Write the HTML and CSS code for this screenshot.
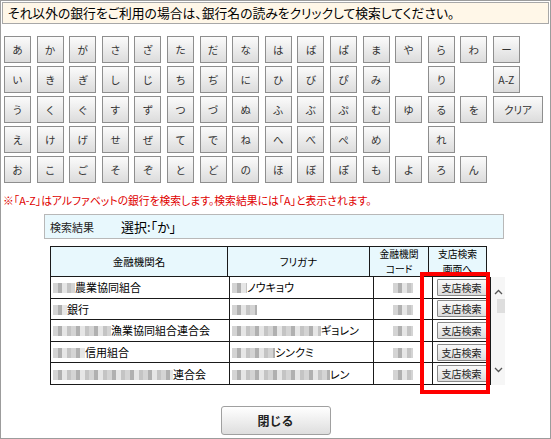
FILE: index.html
```html
<!DOCTYPE html>
<html lang="ja">
<head>
    <meta charset="UTF-8">
    <meta name="viewport" content="width=device-width, initial-scale=1.0">
    <title>金融機関検索</title>
    <link rel="stylesheet" href="styles.css">
</head>
<body>
<div class="frame">
    <!-- guide -->
    <div class="guide">それ以外の銀行をご利用の場合は、銀行名の読みをクリックして検索してください。</div>

    <!-- kana keys -->
    <div class="kana-pad">
        <div class="kana-row">
            <span class="key">あ</span><span class="key">か</span><span class="key">が</span><span class="key">さ</span><span class="key">ざ</span><span class="key">た</span><span class="key">だ</span><span class="key">な</span><span class="key">は</span><span class="key">ば</span><span class="key">ぱ</span><span class="key">ま</span><span class="key">や</span><span class="key">ら</span><span class="key">わ</span><span class="key">ー</span>
        </div>
        <div class="kana-row">
            <span class="key">い</span><span class="key">き</span><span class="key">ぎ</span><span class="key">し</span><span class="key">じ</span><span class="key">ち</span><span class="key">ぢ</span><span class="key">に</span><span class="key">ひ</span><span class="key">び</span><span class="key">ぴ</span><span class="key">み</span><span class="key blank"></span><span class="key">り</span><span class="key blank"></span><span class="key">A-Z</span>
        </div>
        <div class="kana-row">
            <span class="key">う</span><span class="key">く</span><span class="key">ぐ</span><span class="key">す</span><span class="key">ず</span><span class="key">つ</span><span class="key">づ</span><span class="key">ぬ</span><span class="key">ふ</span><span class="key">ぶ</span><span class="key">ぷ</span><span class="key">む</span><span class="key">ゆ</span><span class="key">る</span><span class="key">を</span><span class="key wide">クリア</span>
        </div>
        <div class="kana-row">
            <span class="key">え</span><span class="key">け</span><span class="key">げ</span><span class="key">せ</span><span class="key">ぜ</span><span class="key">て</span><span class="key">で</span><span class="key">ね</span><span class="key">へ</span><span class="key">べ</span><span class="key">ぺ</span><span class="key">め</span><span class="key blank"></span><span class="key">れ</span>
        </div>
        <div class="kana-row">
            <span class="key">お</span><span class="key">こ</span><span class="key">ご</span><span class="key">そ</span><span class="key">ぞ</span><span class="key">と</span><span class="key">ど</span><span class="key">の</span><span class="key">ほ</span><span class="key">ぼ</span><span class="key">ぽ</span><span class="key">も</span><span class="key">よ</span><span class="key">ろ</span><span class="key">ん</span>
        </div>
    </div>

    <p class="note">※「A-Z」はアルファベットの銀行を検索します。検索結果には「A」と表示されます。</p>

    <!-- results -->
    <div class="result-bar">
        <span class="result-label">検索結果</span>
        <span class="result-picked">選択:「か」</span>
    </div>

    <div class="result-area">
        <table class="bank-table head">
            <tr>
                <th class="c-name">金融機関名</th>
                <th class="c-kana">フリガナ</th>
                <th class="c-code"><span class="line">金融機関</span><span class="line">コード</span></th>
                <th class="c-link"><span class="line">支店検索</span><span class="line">画面へ</span></th>
            </tr>
        </table>
        <div class="body-wrap">
            <table class="bank-table rows">
                <tr>
                    <td class="c-name"><span class="blur" style="width:22px"></span>農業協同組合</td>
                    <td class="c-kana"><span class="blur" style="width:15px"></span>ノウキョウ</td>
                    <td class="c-code"><span class="blur" style="width:20px"></span></td>
                    <td class="c-link"><button class="branch-btn">支店検索</button></td>
                </tr>
                <tr>
                    <td class="c-name"><span class="blur" style="width:14px"></span>銀行</td>
                    <td class="c-kana"><span class="blur" style="width:25px"></span></td>
                    <td class="c-code"><span class="blur" style="width:20px"></span></td>
                    <td class="c-link"><button class="branch-btn">支店検索</button></td>
                </tr>
                <tr>
                    <td class="c-name"><span class="blur" style="width:58px"></span>漁業協同組合連合会</td>
                    <td class="c-kana"><span class="blur" style="width:89px"></span>ギョレン</td>
                    <td class="c-code"><span class="blur" style="width:20px"></span></td>
                    <td class="c-link"><button class="branch-btn">支店検索</button></td>
                </tr>
                <tr>
                    <td class="c-name"><span class="blur" style="width:32px"></span>信用組合</td>
                    <td class="c-kana"><span class="blur" style="width:43px"></span>シンクミ</td>
                    <td class="c-code"><span class="blur" style="width:20px"></span></td>
                    <td class="c-link"><button class="branch-btn">支店検索</button></td>
                </tr>
                <tr>
                    <td class="c-name"><span class="blur" style="width:120px"></span>連合会</td>
                    <td class="c-kana"><span class="blur" style="width:98px"></span>レン</td>
                    <td class="c-code"><span class="blur" style="width:20px"></span></td>
                    <td class="c-link"><button class="branch-btn">支店検索</button></td>
                </tr>
            </table>
            <div class="scrollbar">
                <svg class="arrow" width="9" height="6" viewBox="0 0 9 6"><path d="M1 5 L4.5 1.5 L8 5" fill="none" stroke="#555" stroke-width="1.3"/></svg>
                <div class="thumb"></div>
                <div class="track"></div>
                <svg class="arrow" width="9" height="6" viewBox="0 0 9 6"><path d="M1 1 L4.5 4.5 L8 1" fill="none" stroke="#555" stroke-width="1.3"/></svg>
            </div>
        </div>
        <!-- annotation -->
        <div class="highlight"></div>
    </div>

    <div class="actions">
        <button class="close-btn">閉じる</button>
    </div>
</div>
</body>
</html>
```

FILE: styles.css
```css
/* page styles */

body {
    margin: 0;
    font-family: "Noto Sans CJK JP", "Liberation Sans", sans-serif;
    font-feature-settings: "palt";
    color: #000;
    background-color: #fff;
}
.frame {
    width: 551px;
    height: 439px;
    box-sizing: border-box;
    border: 1px solid #9c9c9c;
}

/* guide */
.guide {
    margin: 1px 1px 0 1px;
    height: 22px;
    box-sizing: border-box;
    padding-left: 5px;
    border: 1px solid #a8a8a8;
    background-color: #fff7e8;
    font-size: 12.8px;
    line-height: 20px;
}

/* kana keys */
.kana-pad {
    margin: 12px 0 0 3px;
    display: flex;
    flex-direction: column;
    gap: 3px;
}
.kana-row {
    display: flex;
    gap: 5.6px;
}
.key {
    width: 27px;
    height: 27px;
    box-sizing: border-box;
    display: flex;
    align-items: center;
    justify-content: center;
    border: 1px solid #8e8e8e;
    background: linear-gradient(#fbfbfb, #dcdcdc);
    font-size: 10.5px;
    color: #333;
}
.key.wide {
    width: 50px;
}
.key.blank {
    visibility: hidden;
}

/* note */
.note {
    margin: 10px 0 0 0;
    padding-left: 2px;
    font-size: 10.8px;
    line-height: 14px;
    color: #e00000;
}

/* results */
.result-bar {
    margin: 7px 0 0 43px;
    width: 460px;
    height: 25px;
    box-sizing: border-box;
    display: flex;
    align-items: center;
    border: 1px solid #b8b8b8;
    background-color: #e8f8fd;
}
.result-label {
    padding-left: 5px;
    font-size: 11px;
    color: #222;
}
.result-picked {
    margin-left: 27px;
    font-size: 13px;
}
.result-area {
    position: relative;
    margin: 7px 0 0 49px;
    width: 452px;
}
.bank-table {
    border-collapse: collapse;
    table-layout: fixed;
    width: 434px;
    font-size: 11px;
}
.bank-table th,
.bank-table td {
    border: 1px solid #1a1a1a;
    padding: 0;
}
.bank-table .c-name { width: 176px; }
.bank-table .c-kana { width: 141px; }
.bank-table .c-code { width: 58px; }
.bank-table .c-link { width: 57px; }
.head th {
    height: 29px;
    background-color: #e8f8fd;
    font-weight: normal;
    font-size: 10.5px;
    line-height: 14px;
    text-align: center;
}
.head th .line {
    display: block;
    font-size: 9.8px;
    line-height: 14.5px;
}
.body-wrap {
    display: flex;
}
.rows td {
    height: 20.6px;
    border-top: none;
    padding-left: 2px;
    white-space: nowrap;
    overflow: hidden;
}
.rows td.c-code,
.rows td.c-link {
    text-align: center;
    padding-left: 0;
}
.blur {
    display: inline-block;
    height: 10px;
    vertical-align: -1px;
    background: repeating-linear-gradient(90deg, #d4d4d4 0 5px, #b0b0b0 5px 9px, #e6e6e6 9px 14px, #c4c4c4 14px 18px);
    filter: blur(0.7px);
}
.branch-btn {
    width: 50px;
    height: 17px;
    padding: 0;
    border: 1px solid #8a8a8a;
    border-radius: 1px;
    background: linear-gradient(#fafafa, #dcdcdc);
    font-family: inherit;
    font-size: 10px;
    line-height: 15px;
    color: #222;
}
.scrollbar {
    width: 17px;
    height: 108px;
    display: flex;
    flex-direction: column;
    align-items: center;
    background-color: #f6f6f6;
}
.scrollbar .arrow {
    margin: 12px 0 4px 0;
}
.scrollbar .arrow:last-child {
    margin: 4px 0 12px 0;
}
.scrollbar .thumb {
    width: 8px;
    height: 14px;
    margin-left: 6px;
    background-color: #dedede;
}
.scrollbar .track {
    flex: 1;
}
.highlight {
    position: absolute;
    left: 370px;
    top: 26px;
    width: 70px;
    height: 122px;
    box-sizing: border-box;
    border: 4px solid #ff0000;
}

/* close */
.actions {
    margin-top: 21px;
    display: flex;
    justify-content: center;
}
.close-btn {
    width: 110px;
    height: 29px;
    border: 1px solid #a0a0a0;
    border-radius: 3px;
    background: linear-gradient(#ffffff, #dedede);
    font-family: inherit;
    font-size: 12px;
    font-weight: bold;
    color: #222;
}
```
